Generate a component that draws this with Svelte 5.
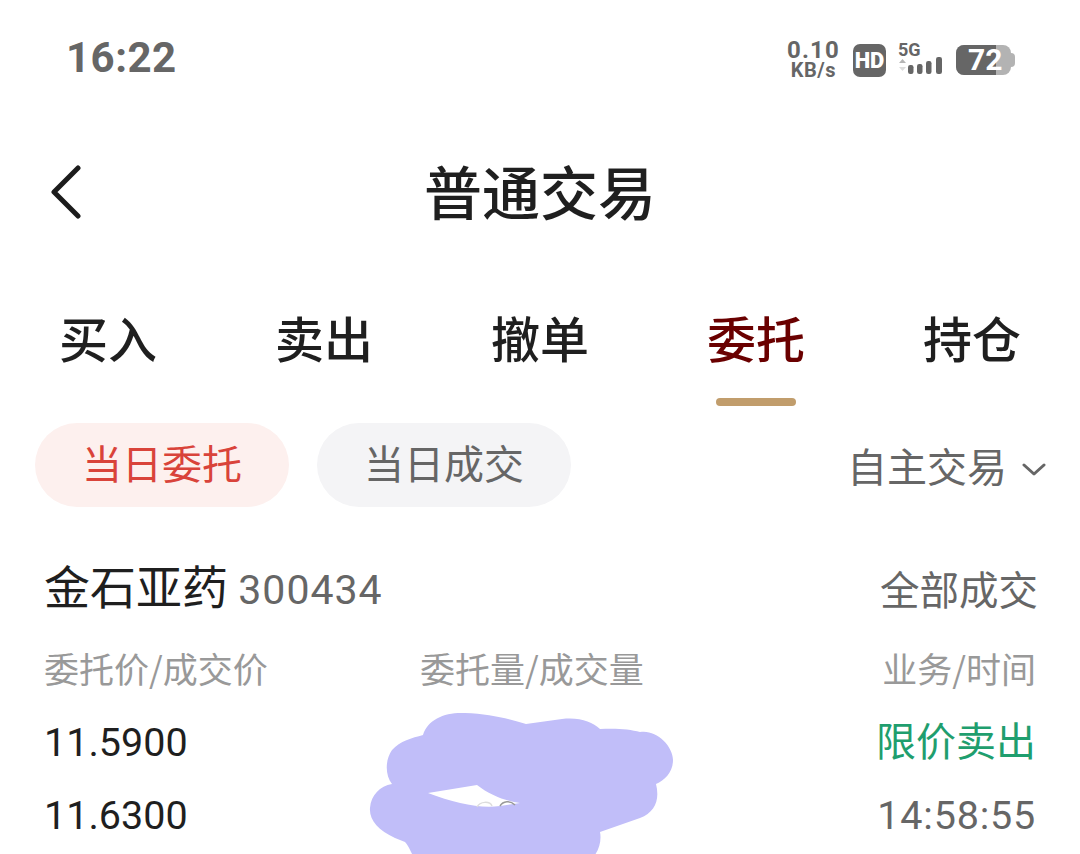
<script lang="ts">
  const tabs = ['买入', '卖出', '撤单', '委托', '持仓'];
  const activeTab = '委托';
</script>

<div class="page">
  <header class="status">
    <span class="time">16:22</span>
    <div class="indicators">
      <div class="speed"><span>0.10</span><span class="unit">KB/s</span></div>
      <span class="hd">HD</span>
      <div class="signal">
        <span class="five-g">5G</span>
        <svg width="46" height="17" viewBox="0 0 46 17">
          <path d="M1 6 L4.5 2 L8 6Z" fill="#b5b5b5" />
          <path d="M1 10 L8 10 L4.5 14Z" fill="#dcdcdc" />
          <g fill="#666">
            <rect x="10" y="8" width="5.5" height="9" rx="2.2" />
            <rect x="19" y="7" width="5.5" height="10" rx="2.2" />
            <rect x="28" y="4" width="5.5" height="13" rx="2.2" />
            <rect x="38" y="0" width="6" height="17" rx="2.2" />
          </g>
        </svg>
      </div>
      <div class="battery"><div class="level"></div><span>72</span><i></i></div>
    </div>
  </header>

  <nav class="title-bar">
    <svg class="back" width="32" height="56" viewBox="0 0 32 56">
      <path d="M28 3 L4 27 L28 51" fill="none" stroke="#1c1c1c" stroke-width="5" stroke-linecap="round" stroke-linejoin="round" />
    </svg>
    <h1>普通交易</h1>
  </nav>

  <div class="tabs">
    {#each tabs as tab}
      <div class="tab" class:active={tab === activeTab}>{tab}</div>
    {/each}
  </div>

  <div class="filters">
    <span class="pill on">当日委托</span>
    <span class="pill">当日成交</span>
    <span class="mode">自主交易
      <svg width="24" height="14" viewBox="0 0 24 14">
        <path d="M2 2 L12 11 L22 2" fill="none" stroke="#666" stroke-width="3" stroke-linecap="round" stroke-linejoin="round" />
      </svg>
    </span>
  </div>

  <section class="order">
    <div class="row head">
      <div class="name">金石亚药 <span class="code">300434</span></div>
      <div class="state">全部成交</div>
    </div>
    <div class="grid labels">
      <span>委托价/成交价</span>
      <span>委托量/成交量</span>
      <span class="end">业务/时间</span>
    </div>
    <div class="grid values first">
      <span>11.5900</span>
      <span></span>
      <span class="end green">限价卖出</span>
    </div>
    <div class="grid values second">
      <span>11.6300</span>
      <span></span>
      <span class="end muted">14:58:55</span>
    </div>
  </section>

  <svg class="scribble" width="1080" height="854" viewBox="0 0 1080 854">
    <path fill="#c1bef9" d="M423 735 C428 719 445 712 465 713 C490 714 510 719 526 724 L562 719 C580 717 592 722 600 729 C615 728 630 729 640 732 C655 729 673 745 673 760 C673 772 665 780 656 784 C660 800 655 812 640 818 L600 832 C602 842 598 854 590 860 L415 860 C410 850 408 845 405 842 L395 838 C378 830 369 820 370 808 C371 795 380 786 392 784 C385 775 385 760 392 750 C400 741 412 738 423 735Z" />
    <path fill="#fff" d="M428 793 L477 785 C490 795 505 801 520 803 L500 806 C480 809 455 803 428 793Z" />
    <path d="M500 806 C503 801 510 800 515 805" fill="none" stroke="#999" stroke-width="1.5" />
    <path d="M477 807 C480 801 490 801 492 806" fill="none" stroke="#ddd" stroke-width="1.5" />
  </svg>
</div>

<style>
  :global(body) { margin: 0; background: #fff; }
  .page {
    position: relative;
    width: 1080px;
    height: 854px;
    overflow: hidden;
    background: #fff;
    font-family: "Noto Sans CJK SC", "Noto Sans", sans-serif;
    color: #1f1f1f;
  }
  .status {
    height: 115px;
    box-sizing: border-box;
    padding: 35px 65px 0 66px;
    display: flex;
    justify-content: space-between;
    align-items: flex-start;
  }
  .time { font: 700 42px/46px "Roboto", sans-serif; color: #666; letter-spacing: 0.5px; }
  .indicators { display: flex; align-items: center; gap: 12px; height: 46px; }
  .speed {
    display: flex;
    flex-direction: column;
    align-items: center;
    font: 700 24px/22px "Roboto", sans-serif;
    color: #666;
    letter-spacing: 1.2px;
    margin-top: 2px;
    margin-right: 1px;
  }
  .speed .unit { font-size: 20px; line-height: 18px; letter-spacing: 0.5px; }
  .hd {
    width: 33px;
    height: 33px;
    border-radius: 7px;
    background: #666;
    color: #fff;
    font: 900 22px/33px "Roboto", sans-serif;
    text-align: center;
    margin-top: 4px;
  }
  .signal { display: flex; flex-direction: column; width: 46px; margin-top: 0; }
  .five-g { font: 700 18px/14px "Roboto", sans-serif; color: #666; }
  .battery {
    position: relative;
    width: 55px;
    height: 30px;
    margin-right: 4px;
    border-radius: 8px;
    background: #b3b3b3;
    margin-top: 4px;
  }
  .battery .level { width: 40px; height: 30px; border-radius: 8px 0 0 8px; background: #666; }
  .battery span {
    position: absolute;
    left: 12px;
    top: 0;
    font: 700 30px/30px "Roboto", sans-serif;
    color: #fff;
  }
  .battery i {
    position: absolute;
    right: -4px;
    top: 8px;
    width: 4px;
    height: 14px;
    border-radius: 0 4px 4px 0;
    background: #b3b3b3;
  }
  .title-bar {
    position: relative;
    height: 160px;
    display: flex;
    justify-content: center;
    align-items: flex-start;
  }
  .title-bar h1 {
    margin: 39px 0 0;
    font-size: 58px;
    line-height: 72px;
    font-weight: 500;
    color: #1f1f1f;
  }
  .back { position: absolute; left: 50px; top: 50px; }
  .tabs {
    display: flex;
    justify-content: space-between;
    padding: 0 16px;
    height: 148px;
    box-sizing: border-box;
  }
  .tab {
    position: relative;
    width: 184px;
    text-align: center;
    font-size: 49px;
    line-height: 66px;
    font-weight: 500;
    color: #1f1f1f;
    margin-top: 29px;
  }
  .tab.active { color: #6a0000; }
  .tab.active::after {
    content: '';
    position: absolute;
    left: 52px;
    top: 94px;
    width: 80px;
    height: 8px;
    border-radius: 4px;
    background: #c19d6c;
  }
  .filters {
    display: flex;
    align-items: center;
    gap: 28px;
    height: 84px;
    padding: 0 34px 0 35px;
  }
  .pill {
    width: 254px;
    height: 84px;
    border-radius: 42px;
    background: #f4f4f6;
    color: #666;
    font-size: 40px;
    line-height: 78px;
    text-align: center;
  }
  .pill.on { background: #fdf0ee; color: #d9433a; }
  .mode {
    margin-left: auto;
    display: flex;
    align-items: center;
    gap: 15px;
    font-size: 40px;
    line-height: 72px;
    height: 84px;
    color: #666;
  }
  .mode svg { margin-top: 10px; }
  .order { padding: 0 44px; }
  .row { display: flex; justify-content: space-between; align-items: center; }
  .head { margin-top: 50px; height: 60px; }
  .name { font-size: 46px; line-height: 60px; color: #1f1f1f; }
  .code { font: 400 41px/60px "Roboto", sans-serif; color: #666; letter-spacing: 1px; }
  .state { font-size: 39.5px; color: #666; margin-right: -2px; }
  .grid { display: grid; grid-template-columns: 376px 1fr 260px; }
  .end { text-align: right; }
  .labels { margin-top: 29px; font-size: 35px; line-height: 44px; color: #999; }
  .values { font: 400 39.5px/60px "Roboto", sans-serif; color: #1f1f1f; }
  .first { margin-top: 23px; }
  .second { margin-top: 13px; }
  .green { font-family: "Noto Sans CJK SC", sans-serif; font-size: 40px; line-height: 52px; color: #1f9e6e; }
  .muted { color: #666; letter-spacing: 0.8px; }
  .scribble { position: absolute; left: 0; top: 0; }
</style>
